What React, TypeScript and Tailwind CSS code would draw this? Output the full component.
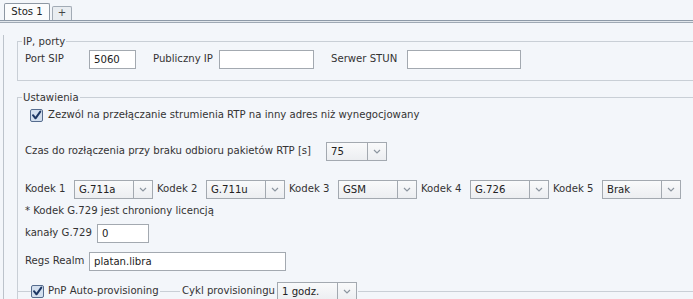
import React from 'react';

function Check() {
  return (
    <svg width="13" height="13" viewBox="0 0 13 13" className="shrink-0">
      <rect x="0.5" y="0.5" width="12" height="12" rx="1.5" fill="#d3dfee" stroke="#566c8e" />
      <path d="M3 6.2 L5.5 9.3 L10.3 2.6" fill="none" stroke="#1d3764" strokeWidth="2" strokeLinecap="round" strokeLinejoin="round" />
    </svg>
  );
}

function Select({ value, width }: { value: string; width: string }) {
  return (
    <div className={`flex h-[19px] shrink-0 border border-[#a3a9b0] bg-gradient-to-b from-[#f9fafb] to-[#eceef1] ${width}`}>
      <span className="flex-1 pl-[4px] leading-[17px] text-[#222]">{value}</span>
      <span className="flex w-[19px] items-center justify-center border-l border-[#a3a9b0]">
        <svg width="8" height="5" viewBox="0 0 8 5">
          <path d="M1 1 L4 4 L7 1" fill="none" stroke="#8c959f" strokeWidth="1.2" />
        </svg>
      </span>
    </div>
  );
}

function Input({ value, width }: { value?: string; width: string }) {
  return (
    <div className={`h-[19px] shrink-0 border border-[#a3a9b0] bg-white pl-[4px] leading-[17px] text-[#222] ${width}`}>
      {value}
    </div>
  );
}

const codecs = [
  { label: 'Kodek 1', value: 'G.711a' },
  { label: 'Kodek 2', value: 'G.711u' },
  { label: 'Kodek 3', value: 'GSM' },
  { label: 'Kodek 4', value: 'G.726' },
  { label: 'Kodek 5', value: 'Brak' },
];

export default function App() {
  return (
    <div className="h-[299px] w-[693px] overflow-hidden whitespace-nowrap bg-[#f3f6fa] font-['DejaVu_Sans_Condensed','DejaVu_Sans',sans-serif] text-[11.25px] text-[#333]">
      {/* tabs */}
      <div className="flex h-[20px] items-end gap-[2px] pl-[4px]">
        <div className="flex h-[17px] w-[46px] items-center justify-center rounded-t-[2px] border border-b-0 border-[#8d97a3] bg-[#fbfcfd] text-[#222]">
          Stos 1
        </div>
        <div className="flex h-[14px] w-[20px] items-center justify-center rounded-t-[2px] border border-b-0 border-[#a2abb5] bg-[#e9edf1] text-[#444]">
          +
        </div>
      </div>
      <div className="h-[3px] w-full border-y border-t-[#8e9aa8] border-b-[#9fa9b4] bg-[#e2e7ec]" />

      <div className="ml-[3px] h-[300px] w-[800px] border-l border-[#bcc3cb] pl-[13px]">
        <fieldset className="mt-[12px] border border-[#c9cfd6] pb-[11px] pl-[7px] pt-[2px]">
          <legend className="ml-[-3px] px-[1px] leading-[13px]">IP, porty</legend>
          <div className="flex h-[19px] items-center">
            <span className="w-[64px]">Port SIP</span>
            <Input value="5060" width="w-[47px]" />
            <span className="ml-[17px] w-[66px]">Publiczny IP</span>
            <Input width="w-[95px]" />
            <span className="ml-[17px] w-[76px]">Serwer STUN</span>
            <Input width="w-[114px]" />
          </div>
        </fieldset>

        <fieldset className="mt-[10px] border border-[#c9cfd6] pl-[7px]">
          <legend className="ml-[-3px] px-[1px] leading-[13px]">Ustawienia</legend>
          <div className="mt-[3px] flex h-[16px] items-center">
            <span className="ml-[5px]">
              <Check />
            </span>
            <span className="ml-[5px]">Zezwól na przełączanie strumienia RTP na inny adres niż wynegocjowany</span>
          </div>

          <div className="mt-[19px] flex h-[19px] items-center">
            <span className="w-[301px]">Czas do rozłączenia przy braku odbioru pakietów RTP [s]</span>
            <Select value="75" width="w-[61px]" />
          </div>

          <div className="mt-[19px] flex h-[19px] items-center">
            {codecs.map((c, i) => (
              <div key={c.label} className={`flex items-center ${i > 0 ? 'ml-[4px]' : ''}`}>
                <span className="w-[49px]">{c.label}</span>
                <Select value={c.value} width="w-[79px]" />
              </div>
            ))}
          </div>

          <div className="mt-[5px] leading-[14px]">* Kodek G.729 jest chroniony licencją</div>

          <div className="mt-[6px] flex h-[19px] items-center">
            <span className="w-[72px]">kanały G.729</span>
            <Input value="0" width="w-[52px]" />
          </div>

          <div className="mt-[9px] flex h-[19px] items-center">
            <span className="w-[64px]">Regs Realm</span>
            <Input value="platan.libra" width="w-[197px]" />
          </div>

          <div className="ml-[-7px] mt-[10px] flex h-[20px] items-center">
            <div className="h-px w-[13px] bg-[#c9cfd6]" />
            <Check />
            <span className="ml-[4px] w-[112px]">PnP Auto-provisioning</span>
            <div className="h-px w-[20px] bg-[#c9cfd6]" />
            <span className="ml-[2px] w-[95px]">Cykl provisioningu</span>
            <Select value="1 godz." width="w-[80px]" />
            <div className="ml-[1px] h-px flex-1 bg-[#c9cfd6]" />
          </div>
        </fieldset>
      </div>
    </div>
  );
}
